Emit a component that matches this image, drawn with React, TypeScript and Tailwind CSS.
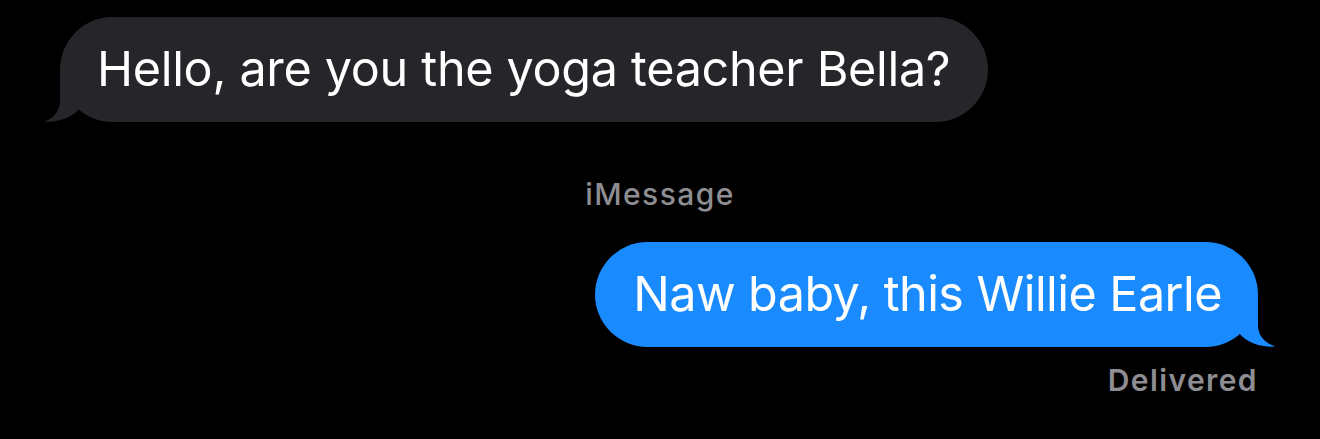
import React from "react";

const font = { fontFamily: "Inter, 'Noto Sans', sans-serif" };

// incoming message bubble, tail on the bottom left
function IncomingBubble({ text }: { text: string }) {
  return (
    <div className="relative self-start ml-[60px]">
      <svg
        className="absolute left-[-16px] top-[50px]"
        width="50"
        height="55"
        viewBox="0 0 50 55"
      >
        <path
          d="M16 3 L16 33 C16 43 11 51 0 54.5 C14 55.5 28 51 36 41 L46 30 L46 3 Z"
          fill="#26252a"
        />
      </svg>
      <div className="relative h-[105px] rounded-full bg-[#26252a] pl-[37px] pr-[38px] flex items-center">
        <span className="text-white text-[48.5px] leading-none tracking-[-0.3px]">{text}</span>
      </div>
    </div>
  );
}

// outgoing message bubble, tail on the bottom right
function OutgoingBubble({ text }: { text: string }) {
  return (
    <div className="relative self-end mr-[62px]">
      <svg
        className="absolute right-[-18px] top-[50px]"
        width="50"
        height="55"
        viewBox="0 0 50 55"
      >
        <path
          d="M32 3 L32 33 C32 43 38 51 50 54.5 C35 55.5 21 51 13 41 L4 30 L4 3 Z"
          fill="#1a8bff"
        />
      </svg>
      <div className="relative h-[105px] rounded-full bg-[#1a8bff] pl-[38px] pr-[36px] flex items-center">
        <span className="text-white text-[48.5px] leading-none tracking-[-0.55px]">{text}</span>
      </div>
    </div>
  );
}

export default function App() {
  return (
    <div className="w-[1320px] h-[439px] bg-black flex flex-col pt-[17px] overflow-hidden" style={font}>
      <IncomingBubble text="Hello, are you the yoga teacher Bella?" />
      <div className="mt-[54px] text-center text-[30px] leading-[36px] font-medium tracking-[1.4px] text-[#8d8d92]">
        iMessage
      </div>
      <div className="mt-[30px] flex flex-col">
        <OutgoingBubble text="Naw baby, this Willie Earle" />
      </div>
      <div className="mt-[15px] self-end mr-[62px] text-[30px] leading-[36px] font-semibold tracking-[1.4px] text-[#8d8d92]">
        Delivered
      </div>
    </div>
  );
}
